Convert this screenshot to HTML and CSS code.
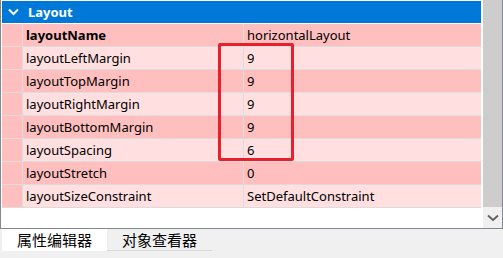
FILE: index.html
```html
<!DOCTYPE html>
<html>
<head>
	<title>Property Editor</title>
	<link rel="stylesheet" href="styles.css">
</head>
<body>
	<div class="view">
		<div class="tree">
			<div class="group">
				<svg class="arrow" width="11" height="8" viewBox="0 0 11 8"><path d="M1 1.5 L5.5 6 L10 1.5" fill="none" stroke="#fff" stroke-width="2"/></svg>
				<span>Layout</span>
			</div>
			<div class="row dark"><span class="indent"></span><span class="name bold">layoutName</span><span class="value">horizontalLayout</span></div>
			<div class="row light"><span class="indent"></span><span class="name">layoutLeftMargin</span><span class="value">9</span></div>
			<div class="row dark"><span class="indent"></span><span class="name">layoutTopMargin</span><span class="value">9</span></div>
			<div class="row light"><span class="indent"></span><span class="name">layoutRightMargin</span><span class="value">9</span></div>
			<div class="row dark"><span class="indent"></span><span class="name">layoutBottomMargin</span><span class="value">9</span></div>
			<div class="row light"><span class="indent"></span><span class="name">layoutSpacing</span><span class="value">6</span></div>
			<div class="row dark"><span class="indent"></span><span class="name">layoutStretch</span><span class="value">0</span></div>
			<div class="row light"><span class="indent"></span><span class="name">layoutSizeConstraint</span><span class="value">SetDefaultConstraint</span></div>
			<div class="mark"></div>
		</div>
		<div class="scrollbar">
			<div class="thumb"></div>
			<div class="down">
				<svg width="12" height="8" viewBox="0 0 12 8"><path d="M1 1.5 L6 6 L11 1.5" fill="none" stroke="#606060" stroke-width="1.8"/></svg>
			</div>
		</div>
	</div>
	<div class="tabs">
		<span class="tab active">属性编辑器</span>
		<span class="tab">对象查看器</span>
	</div>
</body>
</html>
```

FILE: styles.css
```css
body {
	margin: 0;
	background-color: #f0f0f0;
	font-family: "Noto Sans", "Noto Sans CJK SC", sans-serif;
	font-size: 13px;
	color: #000;
}

.view {
	display: flex;
	height: 229px;
	background-color: #fff;
	border: 1px solid #828790;
	border-top: 0;
	box-sizing: border-box;
}

.tree {
	position: relative;
	flex: 1;
	padding: 1px 1px 0 1px;
}

.group {
	display: flex;
	align-items: center;
	height: 22px;
	margin-bottom: 1px;
	background-color: #0078d7;
	color: #fff;
	font-weight: bold;
	font-size: 13px;
}

	.group .arrow {
		margin: 0 9px 0 6px;
	}

.row {
	display: flex;
	height: 22px;
	line-height: 22px;
	border-bottom: 1px solid #dcdcdc;
}

.dark {
	background-color: #ffbfbf;
}

.light {
	background-color: #ffdfdf;
}

.indent {
	width: 20px;
	background-color: #ffbfbf;
	border-right: 1px solid #dcdcdc;
}

.name {
	width: 217px;
	padding-left: 3px;
	border-right: 1px solid #dcdcdc;
}

.bold {
	font-weight: bold;
}

.value {
	padding-left: 3px;
}

.mark {
	position: absolute;
	left: 217px;
	top: 43px;
	width: 70px;
	height: 112px;
	border: 3px solid #e8202c;
	border-radius: 2px;
}

.scrollbar {
	display: flex;
	flex-direction: column;
	width: 19px;
	background-color: #f0f0f0;
	border-left: 1px solid #fff;
}

.thumb {
	height: 207px;
	background-color: #cdcdcd;
}

.down {
	flex: 1;
	display: flex;
	align-items: center;
	justify-content: center;
}

.tabs {
	display: flex;
	padding-left: 2px;
	font-family: "Noto Sans CJK SC", sans-serif;
	font-size: 15px;
}

.tab {
	height: 21px;
	line-height: 21px;
	padding: 0 15px;
	border-bottom: 1px solid #d9d9d9;
}

.active {
	width: 75px;
	background-color: #fff;
	border-bottom: 0;
	height: 22px;
}
```
